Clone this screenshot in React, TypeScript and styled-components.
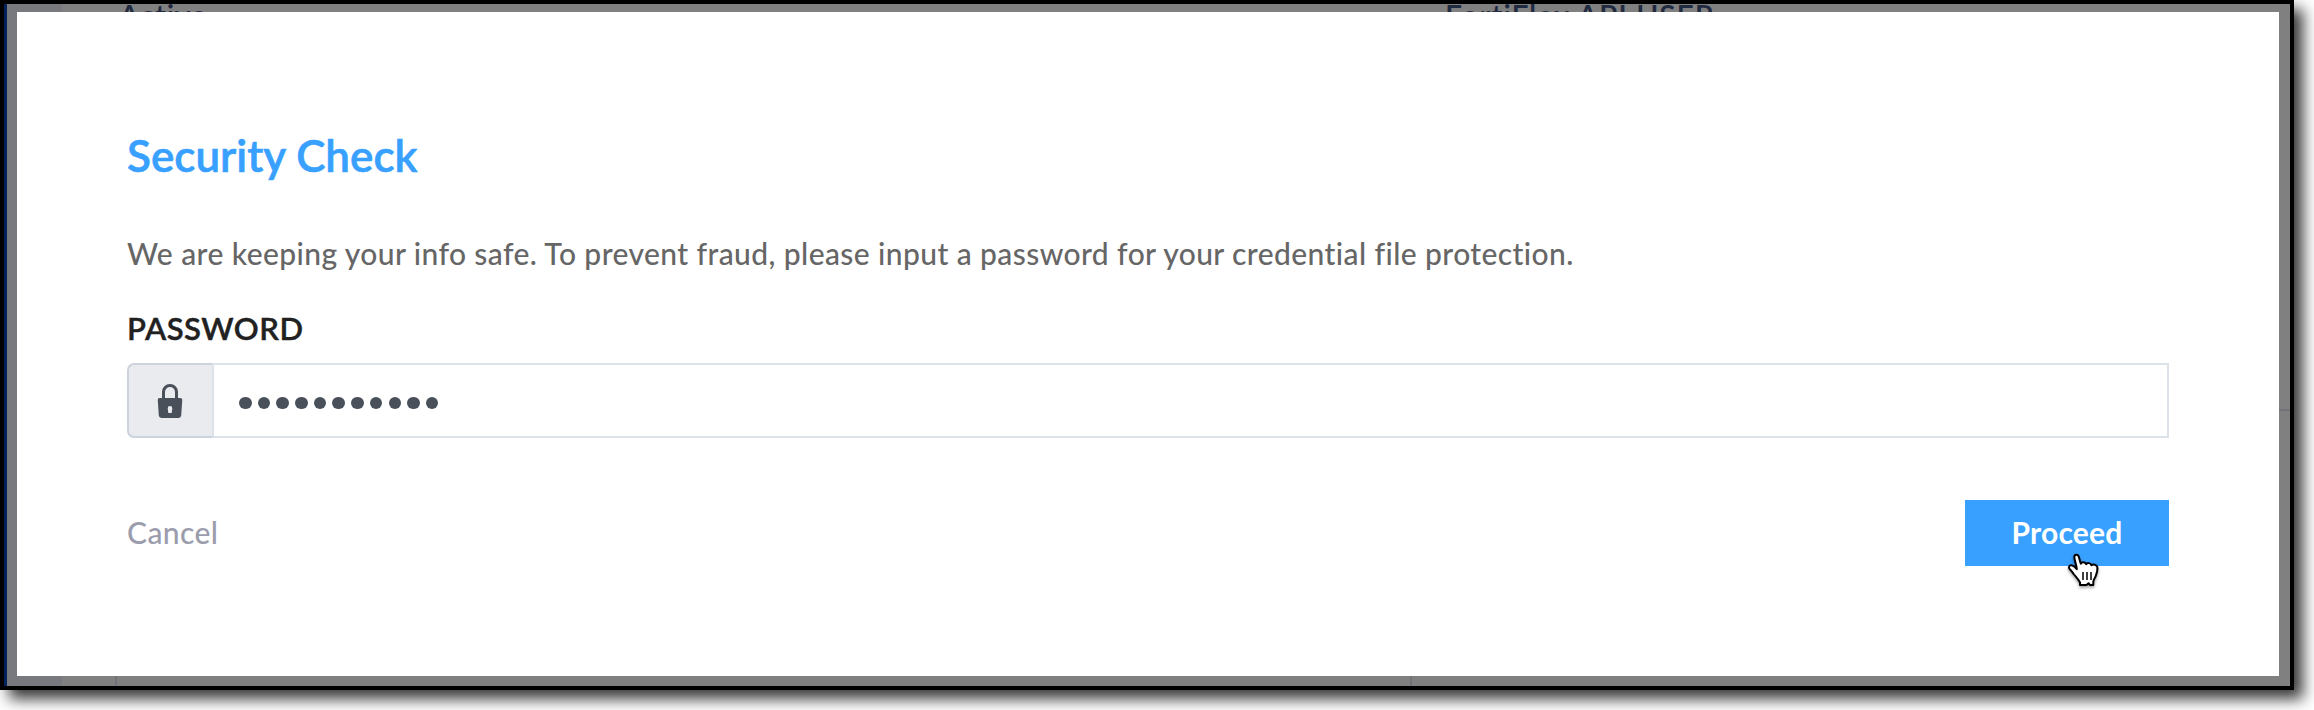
import React from 'react';
import styled, { createGlobalStyle } from 'styled-components';

const GlobalStyle = createGlobalStyle`
  * { box-sizing: border-box; }
  body { margin: 0; background: #fff; font-family: Lato, "Liberation Sans", sans-serif; overflow: hidden; }
`;

const Stage = styled.div`
  width: 2314px;
  height: 710px;
  overflow: hidden;
`;

const Frame = styled.div`
  position: relative;
  width: 2294px;
  height: 690px;
  border: 4px solid #000;
  background: #808080;
  box-shadow: 9px 9px 14px rgba(0, 0, 0, 0.78);
  display: flex;
`;

const Backdrop = styled.div`
  position: absolute;
  inset: 0;
  overflow: hidden;
`;

const NavEdge = styled.div`
  position: absolute;
  left: 0;
  top: 0;
  bottom: 0;
  width: 58px;
  background: #77797e;
  border-left: 3px solid #02225a;
`;

const Clipped = styled.div<{ $x: number; $spacing: number }>`
  position: absolute;
  left: ${(p) => p.$x}px;
  top: -4px;
  color: #1f2a40;
  font-size: 30px;
  line-height: 30px;
  font-weight: 600;
  letter-spacing: ${(p) => p.$spacing}px;
  white-space: nowrap;
`;

const Rule = styled.div<{ $x: number; $y: number; $w: number; $h: number }>`
  position: absolute;
  left: ${(p) => p.$x}px;
  top: ${(p) => p.$y}px;
  width: ${(p) => p.$w}px;
  height: ${(p) => p.$h}px;
  background: #737279;
`;

const Dialog = styled.form`
  position: relative;
  margin: 8px 11px 10px 13px;
  flex: 1;
  background: #fff;
  padding: 117px 110px 0;
  display: flex;
  flex-direction: column;
`;

const Title = styled.h1`
  margin: 0;
  font-size: 44px;
  line-height: 52px;
  font-weight: 600;
  -webkit-text-stroke: 0.6px currentColor;
  color: #38a0ff;
  white-space: nowrap;
`;

const Message = styled.p`
  margin: 54px 0 0;
  font-size: 30px;
  line-height: 36px;
  font-weight: 500;
  letter-spacing: 0.41px;
  color: #666;
  white-space: nowrap;
`;

const Label = styled.label`
  margin-top: 38px;
  font-size: 31px;
  line-height: 38px;
  font-weight: 600;
  letter-spacing: 0.5px;
  -webkit-text-stroke: 0.4px currentColor;
  color: #212121;
`;

const Field = styled.div`
  margin-top: 16px;
  height: 75px;
  display: flex;
`;

const Addon = styled.div`
  width: 85px;
  border: 2px solid #ccd3dc;
  border-right: 0;
  border-radius: 7px 0 0 7px;
  background: #e9ebef;
  display: flex;
  justify-content: center;
  align-items: center;
  padding-right: 2px;
`;

const Input = styled.div`
  flex: 1;
  border: 2px solid #dde1ea;
  padding: 5px 0 0 25px;
  display: flex;
  align-items: center;
  gap: 6.1px;
`;

const Dot = styled.span`
  width: 12.6px;
  height: 12.6px;
  border-radius: 50%;
  background: #495059;
`;

const Actions = styled.div`
  margin-top: 62px;
  display: flex;
  justify-content: space-between;
  align-items: center;
`;

const Cancel = styled.button`
  border: 0;
  padding: 0 0 2px;
  background: none;
  font: 500 30px/36px Lato, sans-serif;
  letter-spacing: 0.4px;
  color: #9b9dad;
`;

const Proceed = styled.button`
  position: relative;
  width: 204px;
  height: 66px;
  border: 0;
  padding: 0 0 2px;
  background: #38a0ff;
  font: 700 30px/36px Lato, sans-serif;
  letter-spacing: 0.2px;
  color: #fff;
`;

const Pointer = styled.svg`
  position: absolute;
  left: 102px;
  top: 53px;
  overflow: visible;
  filter: drop-shadow(0 2px 1.5px rgba(0, 0, 0, 0.35));
`;

export default function App() {
  return (
    <Stage>
      <GlobalStyle />
      <Frame>
        <Backdrop>
          <NavEdge />
          <Clipped $x={115} $spacing={0.7}>Active</Clipped>
          <Clipped $x={1441} $spacing={0.9}>FortiFlex API USER</Clipped>
          <Rule $x={111} $y={665} $w={2} $h={17} />
          <Rule $x={1406} $y={665} $w={2} $h={17} />
          <Rule $x={2270} $y={405} $w={16} $h={2} />
        </Backdrop>
        <Dialog>
          <Title>Security Check</Title>
          <Message>
            We are keeping your info safe. To prevent fraud, please input a password for your credential file protection.
          </Message>
          <Label>PASSWORD</Label>
          <Field>
            <Addon>
              <svg width="26" height="36" viewBox="0 0 26 36">
                <path d="M6.5 16V9a6.5 6.5 0 0 1 13 0v7" fill="none" stroke="#495059" strokeWidth="3" />
                <path
                  fillRule="evenodd"
                  fill="#495059"
                  d="M3 15h20q2.4 0 2.2 2.4l-1 15.2q-.2 2.4-2.6 2.4H4.4q-2.4 0-2.6-2.4L.8 17.4Q.6 15 3 15zM13 23a2.3 2.3 0 0 0-2.3 2.3l.6 4.7h3.4l.6-4.7A2.3 2.3 0 0 0 13 23z"
                />
              </svg>
            </Addon>
            <Input>
              {Array.from({ length: 11 }, (_, i) => (
                <Dot key={i} />
              ))}
            </Input>
          </Field>
          <Actions>
            <Cancel type="button">Cancel</Cancel>
            <Proceed type="button">
              Proceed
              <Pointer width="33" height="36" viewBox="0 0 33 36">
                <path
                  d="M13 32v-2.5C11.5 26.5 9 24 7 21.5 5.5 19.5 4.5 17.8 2.800 16.200 1 14.300 2.300 12 4.600 12.300c2 .3 3.600 1.800 5.200 3.800-.2-4-2.300-8-2.500-12C7.200 1 11 .8 11.800 3.800l2 7c.7-2.300 4.700-2.300 5.400.5 1-2 4.600-1.500 5.200 1 1.400-1.500 5.600-.7 6 2 .4 3-.6 6-1.800 9-.9 2.300-2.300 3.500-2.300 5.700v3h-3.300l-1.500-1.800-2 1.800z"
                  fill="#fff"
                  stroke="#000"
                  strokeWidth="2"
                  strokeLinejoin="round"
                />
                <path d="M16 19v8M20 19v8M24 19v8" stroke="#000" strokeWidth="1.5" />
              </Pointer>
            </Proceed>
          </Actions>
        </Dialog>
      </Frame>
    </Stage>
  );
}
